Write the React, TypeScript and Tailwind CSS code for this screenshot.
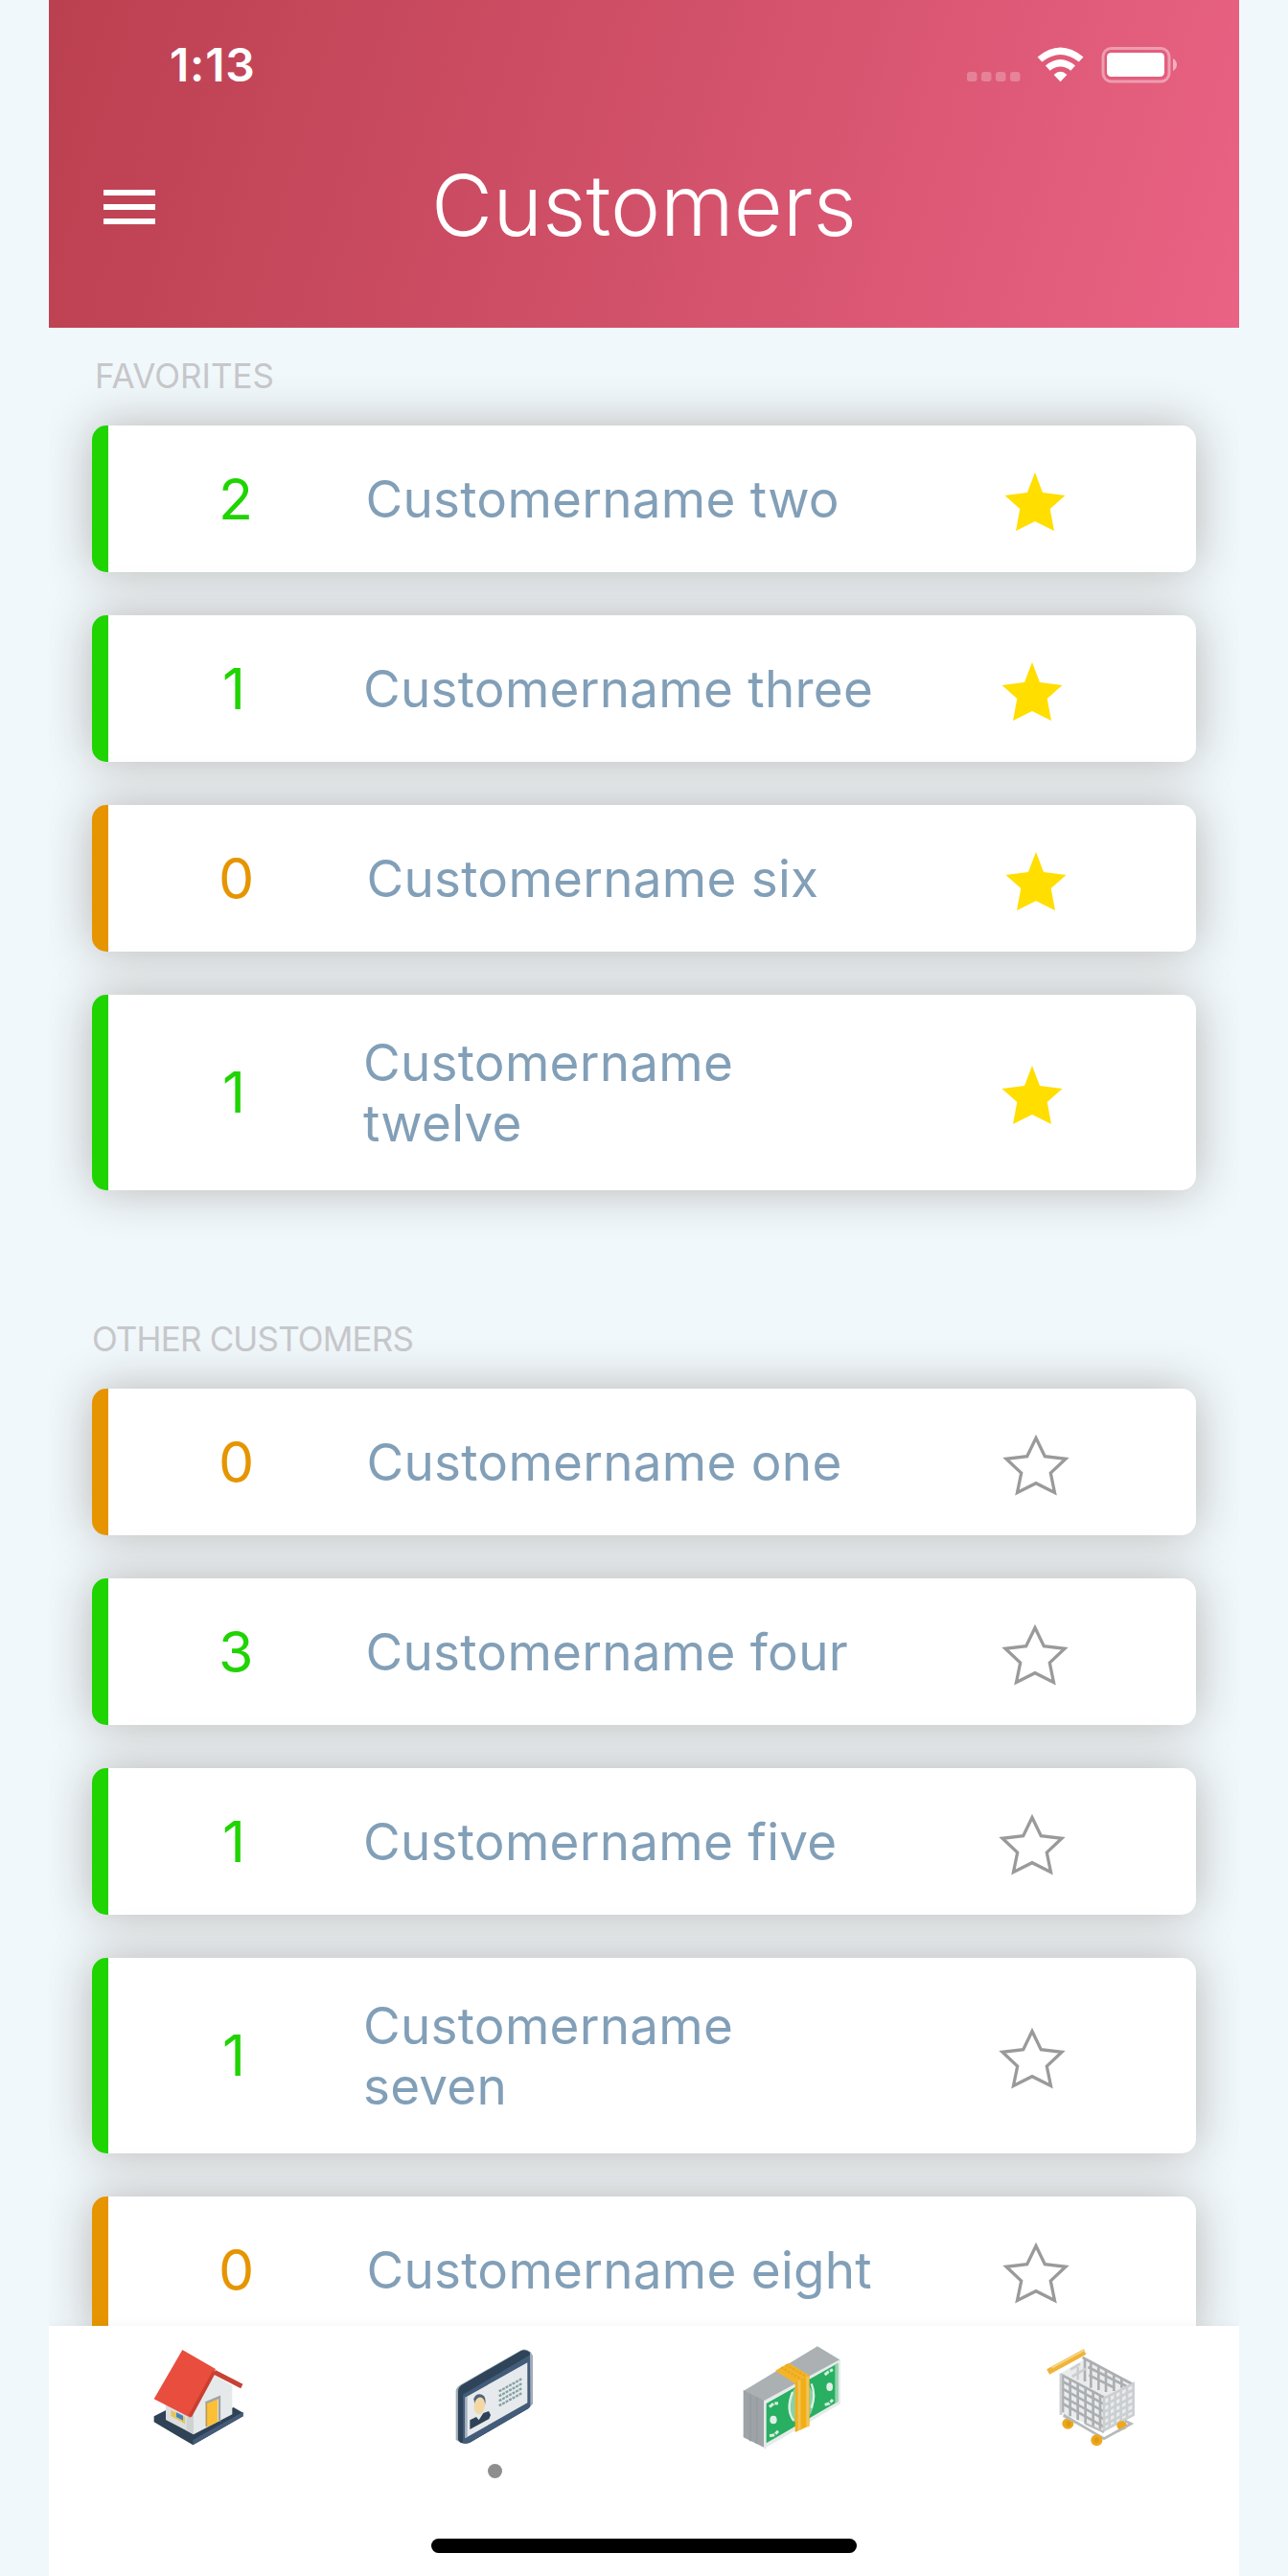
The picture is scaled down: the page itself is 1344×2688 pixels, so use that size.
import React from "react";

type Customer = { count: number; name: string };

const favorites: Customer[] = [
  { count: 2, name: "Customername two" },
  { count: 1, name: "Customername three" },
  { count: 0, name: "Customername six" },
  { count: 1, name: "Customername\ntwelve" },
];

const others: Customer[] = [
  { count: 0, name: "Customername one" },
  { count: 3, name: "Customername four" },
  { count: 1, name: "Customername five" },
  { count: 1, name: "Customername\nseven" },
  { count: 0, name: "Customername eight" },
];

function Star({ filled }: { filled: boolean }) {
  return (
    <svg className="h-16 w-[68px] shrink-0 overflow-visible" viewBox="0 -3.5 68 64">
      {filled ? (
        <path
          d="M34 .5 42 21.5 65.5 24.5 49.7 38.5 54 61.5 34 51.5 14 61.5 18.3 38.5 2.5 24.5 26 21.5Z"
          fill="#ffde00"
        />
      ) : (
        <path
          d="M34 3 43.300 22.200 65 24.800 49.300 39.500 53.500 60 34 50.200 14.500 60 18.700 39.500 3 24.800 24.700 22.200Z"
          fill="none"
          stroke="#9a9a9a"
          strokeWidth="3.3"
        />
      )}
    </svg>
  );
}

function CustomerCard({ customer, favorite }: { customer: Customer; favorite: boolean }) {
  const { count, name } = customer;
  const tone = count > 0 ? "border-[#1fd400] text-[#1fd400]" : "border-[#e69500] text-[#e69500]";
  const cell =
    count === 1 ? "ml-[119px] w-[147px]" : count === 0 ? "ml-[115px] w-[154.5px]" : "ml-[115px] w-[153.5px]";
  return (
    <div
      className={`flex min-h-[153px] items-center rounded-[15px] border-l-[17px] bg-white py-[38px] shadow-[0_0_50px_rgb(184,181,178)] ${tone}`}
    >
      <div className={`shrink-0 text-[59px] leading-[60px] ${cell}`}>{count}</div>
      <div className="w-[664px] shrink-0 pt-[2px] text-[53px] leading-[63px] tracking-[0.25px] whitespace-pre-line text-[#829fb8]">
        {name}
      </div>
      <Star filled={favorite} />
    </div>
  );
}

function Section({ title, items, favorite }: { title: string; items: Customer[]; favorite: boolean }) {
  return (
    <section>
      <h2
        className={`mb-[34px] text-[35px] leading-[36px] text-[#c7c7c9] ${
          favorite ? "pl-[3px]" : "tracking-[-0.85px]"
        }`}
      >
        {title}
      </h2>
      <div className="flex flex-col gap-[45px]">
        {items.map((c) => (
          <CustomerCard key={c.name} customer={c} favorite={favorite} />
        ))}
      </div>
    </section>
  );
}

function StatusIcons() {
  return (
    <svg className="h-[38px] w-[220px]" viewBox="1009 49 220 38">
      <g fill="#fff" fillOpacity=".25">
        <rect x="1009" y="75" width="10.5" height="10" rx="3" />
        <rect x="1024" y="75" width="10.5" height="10" rx="3" />
        <rect x="1039" y="75" width="10.5" height="10" rx="3" />
        <rect x="1054" y="75" width="10.5" height="10" rx="3" />
      </g>
      <g fill="#fff">
        <path d="M1082.6 59.5Q1106.500 39.500 1130.500 59.500L1125.800 64.500Q1106.500 49.300 1087.300 64.500Z" />
        <path d="M1091 68.500Q1106.500 55.500 1122 68.500L1117.300 73.700Q1106.500 65.500 1095.700 73.700Z" />
        <path d="M1099.600 78Q1106.500 71.500 1113.400 78L1106.500 85.300Z" />
        <rect x="1155" y="55" width="60" height="25" rx="4.500" />
      </g>
      <rect x="1151" y="50.500" width="69" height="34.500" rx="8.500" fill="none" stroke="#fff" strokeOpacity=".4" strokeWidth="3" />
      <path d="M1224 61Q1228 63.500 1228 67.500Q1228 71.500 1224 74Z" fill="#fff" fillOpacity=".5" />
    </svg>
  );
}

function HouseIcon() {
  return (
    <svg className="h-[140px] w-[160px]" viewBox="-11 21 480 420">
      <path d="M93 304 135 283 215 330 342 276 372 293V304L215 394 93 322Z" fill="#2f4256" />
      <path d="M215 378 372 290V304L215 394Z" fill="#445c78" />
      <path d="M130 262 217 300V361L130 315Z" fill="#dcdfe0" />
      <path d="M195 310 217 290V361L195 349Z" fill="#cfd2d3" />
      <path d="M217 280 284 176 338 208V298L217 361Z" fill="#e6e9ea" />
      <path d="M146 285 190 306V328L146 303Z" fill="#e6c55b" />
      <path d="M163 292 184 302V317L163 306Z" fill="#4381c5" />
      <path d="M257 264 292 247V322L257 338Z" fill="#fbc036" />
      <path d="M254 262 298 244V320" fill="none" stroke="#a3a3a3" strokeWidth="7" />
      <path d="M257 264V336" stroke="#b99a55" strokeWidth="5" />
      <path d="M282 166 368 210" stroke="#c74235" strokeWidth="15" />
      <path d="M182 96 286 156 207 308 93 250Z" fill="#e84d3d" />
      <path d="M282 164 206 304" stroke="#c83f32" strokeWidth="11" />
    </svg>
  );
}

function IdCardIcon() {
  return (
    <svg className="h-[140px] w-[160px]" viewBox="-10 21 480 420">
      <path d="M106 226Q106 215 118 207L308 98Q326 89 340 103L347 115V265L334 280 152 385Q128 395 106 378Z" fill="#a0acba" />
      <path d="M113 226Q113 214 124 206L310 99Q324 92 338 104L339 270Q339 276 332 280L150 386Q134 392 120 386L113 378Z" fill="#2f4459" />
      <path d="M128 236 338 112V266Q338 276 330 281L150 386Q138 391 128 386Z" fill="#425c79" />
      <path d="M134 246 330 136V262L136 372Z" fill="#e6eaec" />
      <path d="M134 246 142 242V368L134 372Z" fill="#a5b0bd" />
      <path d="M150 316 170 306 178 316 192 294 209 288 215 300 210 312 150 345Z" fill="#2f4257" />
      <path d="M162 250Q168 231 188 236Q202 242 198 266L166 270Z" fill="#50647b" />
      <ellipse cx="180" cy="271" rx="17" ry="27" fill="#f3d8a6" transform="rotate(8 180 271)" />
      <g stroke="#85a1a5" strokeWidth="7" strokeDasharray="9 3">
        <path d="M241 226 312 187M241 241 312 202M241 256 312 217M241 271 312 232" />
      </g>
    </svg>
  );
}

function MoneyIcon() {
  return (
    <svg className="h-[140px] w-[160px]" viewBox="-8 21 480 420">
      <path d="M78 225 310 85 382 128 148 262Z" fill="#abb0b3" />
      <path d="M78 222 148 258V404L78 370Z" fill="#9da3a7" />
      <path d="M100 234V382M120 244V390" stroke="#979da1" strokeWidth="7" />
      <path d="M142 256 382 125V265L142 406Z" fill="#e7ebec" />
      <path d="M150 264 374 138V258L150 388Z" fill="#28af61" />
      <path d="M365 143 374 138V258L365 264Z" fill="#91d5ad" />
      <ellipse cx="259" cy="264" rx="39" ry="62" fill="#8bd0a7" transform="rotate(10 259 264)" />
      <path d="M232 228Q210 285 236 318M291 202Q306 238 291 278" fill="none" stroke="#dff0e6" strokeWidth="7" />
      <path
        d="M160 275 173 264 187 263M160 365 176 362 187 350M333 174 345 164 358 158M333 268 347 264 358 252"
        fill="none"
        stroke="#d7efdf"
        strokeWidth="9"
        strokeDasharray="16 4"
      />
      <ellipse cx="172" cy="315" rx="11" ry="13" fill="#e0efe5" />
      <ellipse cx="348" cy="212" rx="10" ry="13" fill="#e0efe5" />
      <path d="M178 161 220 137 285 176 240 202Z" fill="#f3b42c" />
      <path d="M196 151 262 190M211 143 278 181" stroke="#eaa918" strokeWidth="7" strokeDasharray="8 4" />
      <path d="M240 199 285 175V334L240 354Z" fill="#f3ae13" />
      <path d="M253 192V348M279 179V337" stroke="#efc35c" strokeWidth="9" />
    </svg>
  );
}

function CartIcon() {
  return (
    <svg className="h-[140px] w-[160px]" viewBox="-7 21 480 420">
      <path d="M136 172 215 125 368 202V300L275 350 136 292Z" fill="#e4e6e7" fillOpacity=".8" />
      <g fill="none" stroke="#acafb2" strokeWidth="8">
        <path d="M208 120 365 204M225 150 345 210M228 175 310 216M215 125V195M234 135V215M258 147V222M281 160V228M306 173V225M330 186V215" />
        <path d="M138 172 275 245M145 195 275 266M145 218 275 289M145 242 275 313M145 264 275 337" />
        <path d="M146 178V292M169 190V304M193 203V316M217 215V327M241 228V338M263 240V344" />
      </g>
      <g fill="none" stroke="#cbcfd1" strokeWidth="8">
        <path d="M275 248 367 202V300L275 348ZM278 268 365 222M278 289 365 243M278 310 365 263M278 330 365 284M292 240V340M310 230V330M328 220V322M347 211V310" />
        <path d="M140 170V300" />
        <path d="M170 158 200 140M175 180 218 155M193 150V190" />
      </g>
      <path d="M148 300 275 374 360 327 340 318" fill="none" stroke="#b6babd" strokeWidth="8" />
      <path d="M215 326 275 354" stroke="#b9bdbf" strokeWidth="7" />
      <g fill="#eda81d">
        <ellipse cx="162" cy="327" rx="18" ry="17" />
        <ellipse cx="252" cy="379" rx="18" ry="18" />
        <ellipse cx="331" cy="333" rx="16" ry="14" />
      </g>
      <g fill="#e09b14">
        <ellipse cx="164" cy="327" rx="8" ry="9" />
        <ellipse cx="252" cy="379" rx="8" ry="9" />
      </g>
      <path d="M148 303 190 325M318 352 352 332" stroke="#b6babd" strokeWidth="6" />
      <path d="M100 165 215 102" stroke="#efb43a" strokeWidth="18" />
      <path d="M112 152 215 96" stroke="#f9d583" strokeWidth="5" />
    </svg>
  );
}

const tabs = [
  { id: "home", Icon: HouseIcon },
  { id: "customers", Icon: IdCardIcon },
  { id: "payments", Icon: MoneyIcon },
  { id: "cart", Icon: CartIcon },
];

export default function App() {
  return (
    <div className="h-[2688px] w-full overflow-hidden bg-[#f0f8fc] pl-[51px] font-['Inter','Liberation_Sans',sans-serif]">
      <div className="flex h-full w-[1242px] flex-col overflow-hidden">
        <header className="z-10 h-[342px] shrink-0 bg-[linear-gradient(106deg,#bb404f_0%,#d2516a_52%,#ea6284_100%)] text-white">
          <div className="flex justify-between pt-[44px] pr-[64px] pl-[126px]">
            <div className="text-[48px] leading-[48px] font-semibold tracking-[0.8px]">1:13</div>
            <div className="pt-[5px]">
              <StatusIcons />
            </div>
          </div>
          <div className="grid grid-cols-[200px_1fr_200px] items-center pt-[77px]">
            <button className="ml-[57px] flex w-[54px] flex-col gap-[9px]" aria-label="Menu">
              <span className="h-[6px] bg-white" />
              <span className="h-[6px] bg-white" />
              <span className="h-[6px] bg-white" />
            </button>
            <h1 className="pb-[3px] text-center text-[88px] leading-[90px] font-light">Customers</h1>
          </div>
        </header>

        <main className="flex min-h-0 flex-1 flex-col gap-[137px] overflow-hidden px-[45px] pt-[32px]">
          <Section title="FAVORITES" items={favorites} favorite />
          <Section title="OTHER CUSTOMERS" items={others} favorite={false} />
        </main>

        <nav className="z-10 flex h-[261px] shrink-0 flex-col justify-between bg-white pb-6 shadow-[0_0_10px_rgba(0,0,0,0.06)]">
          <div className="grid grid-cols-4">
            {tabs.map(({ id, Icon }) => (
              <div key={id} className="flex flex-col items-center">
                <Icon />
                {id === "customers" && <span className="mt-1 h-[15px] w-[15px] rounded-full bg-[#8e8e8e]" />}
              </div>
            ))}
          </div>
          <div className="h-[15px] w-[444px] self-center rounded-full bg-black" />
        </nav>
      </div>
    </div>
  );
}
